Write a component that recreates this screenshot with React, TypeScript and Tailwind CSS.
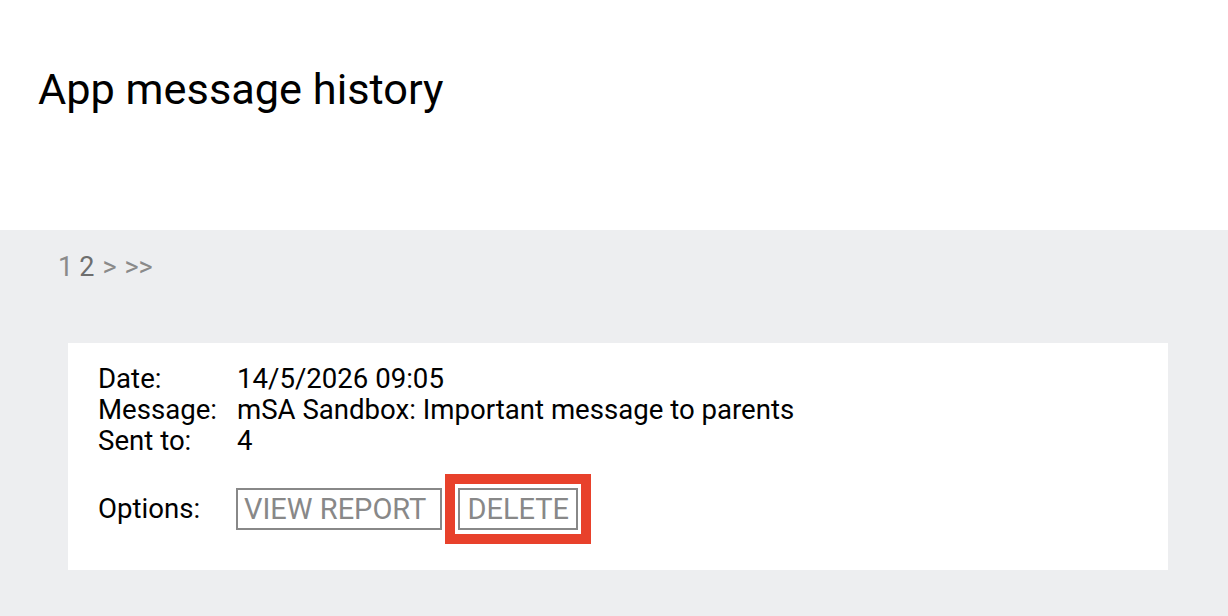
export default function App() {
  const rows = [
    { label: "Date:", value: "14/5/2026 09:05" },
    { label: "Message:", value: "mSA Sandbox: Important message to parents" },
    { label: "Sent to:", value: "4" },
  ];

  return (
    <div className="min-h-screen bg-[#edeef0] font-['Roboto',sans-serif]">
      <header className="h-[230px] bg-white px-[38px] pt-[62px]">
        <h1 className="text-[43.3px] leading-[56px] font-normal text-black">App message history</h1>
      </header>

      <div className="px-[58px] pt-[20px] text-[#8a8a8a]">
        <div className="flex items-baseline gap-[8px] text-[27px] leading-[34px]">
          <span>1</span>
          <span className="-ml-[2px] text-[#6e6e6e]">2</span>
          <span>&gt;</span>
          <span>&gt;&gt;</span>
        </div>
      </div>

      <div className="pl-[68px] pr-[60px] pt-[59px]">
        <div className="bg-white px-[30px] pt-[20px] pb-[26px] text-black">
          {rows.map((r) => (
            <div key={r.label} className="flex text-[27.6px] leading-[31px]">
              <span className="w-[139px]">{r.label}</span>
              <span>{r.value}</span>
            </div>
          ))}
          <div className="mt-[18px] flex items-center text-[27.6px]">
            <span className="w-[138px]">Options:</span>
            <button className="h-[42px] border-2 border-[#888] pl-[6px] pr-[14px] text-[29px] leading-none text-[#888]">
              VIEW REPORT
            </button>
            <div className="ml-[3px] border-[10px] border-[#e8412b] px-[3px] py-[4px]">
              <button className="h-[42px] border-2 border-[#888] px-[7px] text-[29px] leading-none text-[#888]">
                DELETE
              </button>
            </div>
          </div>
        </div>
      </div>
    </div>
  );
}
